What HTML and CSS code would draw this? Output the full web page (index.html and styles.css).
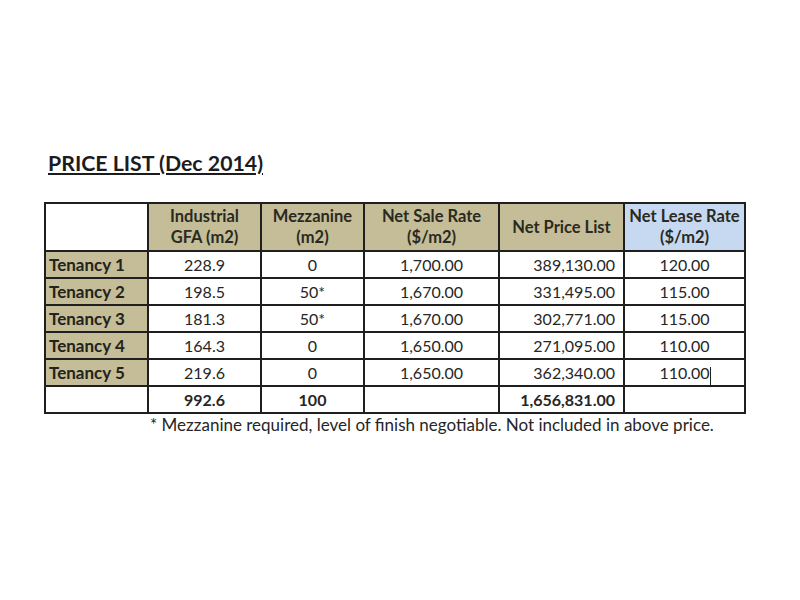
FILE: index.html
```html
<!DOCTYPE html>
<html>
<head>
<meta charset="utf-8">
<link rel="stylesheet" href="styles.css">
</head>
<body>
<div class="page">
  <h1 class="title">PRICE LIST (Dec 2014)</h1>
  <table class="price">
    <colgroup>
      <col class="c0"><col class="c1"><col class="c2"><col class="c3"><col class="c4"><col class="c5">
    </colgroup>
    <thead>
      <tr>
        <th class="blank"></th>
        <th class="tan">Industrial<br>GFA (m2)</th>
        <th class="tan">Mezzanine<br>(m2)</th>
        <th class="tan">Net Sale Rate<br>($/m2)</th>
        <th class="tan">Net Price List</th>
        <th class="blue">Net Lease Rate<br>($/m2)</th>
      </tr>
    </thead>
    <tbody>
      <tr><td class="label">Tenancy 1</td><td>228.9</td><td>0</td><td>1,700.00</td><td class="r">389,130.00</td><td>120.00</td></tr>
      <tr><td class="label">Tenancy 2</td><td>198.5</td><td>50*</td><td>1,670.00</td><td class="r">331,495.00</td><td>115.00</td></tr>
      <tr><td class="label">Tenancy 3</td><td>181.3</td><td>50*</td><td>1,670.00</td><td class="r">302,771.00</td><td>115.00</td></tr>
      <tr><td class="label">Tenancy 4</td><td>164.3</td><td>0</td><td>1,650.00</td><td class="r">271,095.00</td><td>110.00</td></tr>
      <tr><td class="label">Tenancy 5</td><td>219.6</td><td>0</td><td>1,650.00</td><td class="r">362,340.00</td><td><span class="cursor">110.00</span></td></tr>
      <tr class="total"><td></td><td>992.6</td><td>100</td><td></td><td class="r">1,656,831.00</td><td></td></tr>
    </tbody>
  </table>
  <p class="note">* Mezzanine required, level of finish negotiable. Not included in above price.</p>
</div>
</body>
</html>
```

FILE: styles.css
```css
html, body {
  margin: 0;
  padding: 0;
  background: #ffffff;
}
body {
  font-family: Lato, "Open Sans", sans-serif;
  color: #262626;
  width: 800px;
  height: 600px;
  overflow: hidden;
}
.page {
  padding: 150px 0 0 44px;
}
.title {
  margin: 0 0 0 4px;
  font-size: 21.3px;
  line-height: 27px;
  font-weight: 700;
  color: #1c1c1c;
  text-decoration: underline;
  text-decoration-thickness: 2px;
  text-underline-offset: 2px;
}
.price {
  margin-top: 25px;
  border-collapse: collapse;
  table-layout: fixed;
  width: 701px;
  font-size: 16px;
}
.c0 { width: 103px; }
.c1 { width: 113px; }
.c2 { width: 103px; }
.c3 { width: 135px; }
.c4 { width: 125px; }
.c5 { width: 121px; }
.price th,
.price td {
  border: 2px solid #1f1f1f;
  padding: 0;
  text-align: center;
  vertical-align: middle;
}
.price th {
  height: 46px;
  font-size: 16.5px;
  font-weight: 700;
  line-height: 21px;
  color: #2a2a22;
}
.price td {
  height: 25px;
  line-height: 25px;
}
.tan { background: #c4bd97; }
.blue { background: #c6d9f1; }
.blank { background: #ffffff; }
.price td.label {
  background: #c4bd97;
  text-align: left;
  padding-left: 3px;
  font-size: 17px;
  font-weight: 700;
  color: #23231c;
}
.price td.r {
  text-align: right;
  padding-right: 8px;
}
.total td {
  font-weight: 700;
}
.cursor {
  position: relative;
}
.cursor::after {
  content: "";
  position: absolute;
  right: -1px;
  top: 4px;
  width: 1px;
  height: 18px;
  background: #222;
}
.note {
  margin: 0 0 0 106px;
  font-size: 17px;
  line-height: 22px;
  color: #262626;
}
```
